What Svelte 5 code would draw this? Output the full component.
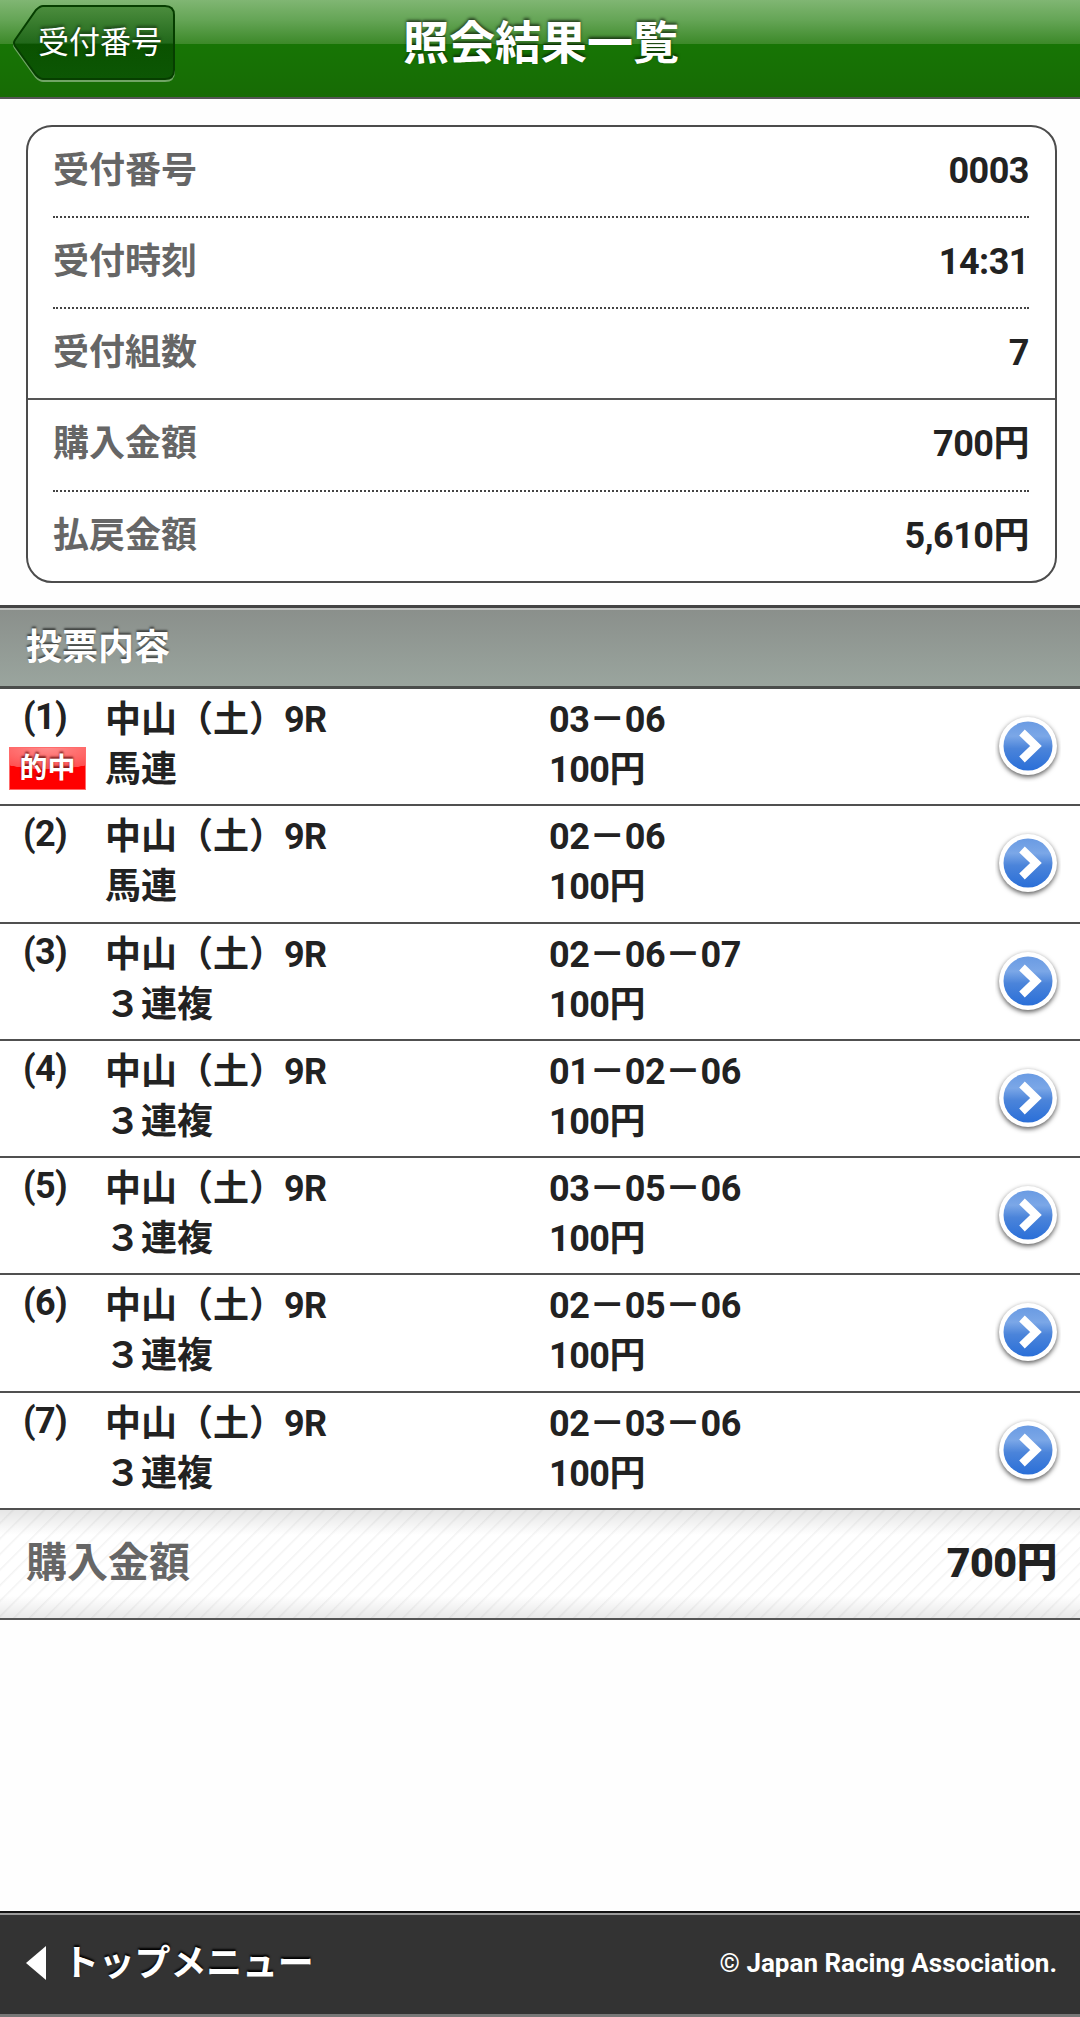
<script lang="ts">
	const summary = [
		{ label: '受付番号', value: '0003', line: 'dotted' },
		{ label: '受付時刻', value: '14:31', line: 'dotted' },
		{ label: '受付組数', value: '7', line: 'solid' },
		{ label: '購入金額', value: '700円', line: 'dotted' },
		{ label: '払戻金額', value: '5,610円', line: 'none' }
	];

	const bets = [
		{ type: '馬連', numbers: '03－06', hit: true },
		{ type: '馬連', numbers: '02－06', hit: false },
		{ type: '３連複', numbers: '02－06－07', hit: false },
		{ type: '３連複', numbers: '01－02－06', hit: false },
		{ type: '３連複', numbers: '03－05－06', hit: false },
		{ type: '３連複', numbers: '02－05－06', hit: false },
		{ type: '３連複', numbers: '02－03－06', hit: false }
	];
</script>

<div class="page">
	<header>
		<button class="back">
			<svg width="164" height="82" viewBox="0 0 164 82" aria-hidden="true">
				<defs>
					<linearGradient id="back-fill" x1="0" y1="0" x2="0" y2="1">
						<stop offset="0" stop-color="#4c8d3e" />
						<stop offset="0.51" stop-color="#21681a" />
						<stop offset="0.52" stop-color="#0a5200" />
						<stop offset="1" stop-color="#0c5604" />
					</linearGradient>
				</defs>
				<path class="rim" d="M31 4H153Q162 4 162 13V68Q162 77 153 77H31Q28 77 24 73L3 44Q1 41 3 38L24 8Q28 4 31 4Z" />
				<path class="face" d="M31 4H153Q162 4 162 13V68Q162 77 153 77H31Q28 77 24 73L3 44Q1 41 3 38L24 8Q28 4 31 4Z" fill="url(#back-fill)" />
			</svg>
			<span>受付番号</span>
		</button>
		<h1>照会結果一覧</h1>
	</header>

	<dl class="card">
		{#each summary as item}
			<div class="item {item.line}">
				<dt>{item.label}</dt>
				<dd>{item.value}</dd>
			</div>
		{/each}
	</dl>

	<h2>投票内容</h2>

	<ul>
		{#each bets as bet, i}
			<li>
				<div class="no">
					<span>({i + 1})</span>
					{#if bet.hit}<em>的中</em>{/if}
				</div>
				<div class="race">中山（土）<span>9R</span><br />{bet.type}</div>
				<div class="stake">{bet.numbers}<br />100円</div>
				<svg class="go" width="66" height="68" viewBox="0 0 66 68" aria-hidden="true">
					<circle class="ring" cx="33" cy="32" r="29" />
					<circle cx="33" cy="32" r="24.500" fill="url(#go-fill)" />
					<path d="M27 18.500L41 32L27 45.500" />
				</svg>
			</li>
		{/each}
	</ul>

	<div class="total">
		<span>購入金額</span>
		<strong>700円</strong>
	</div>

	<footer>
		<a href="#top">
			<svg width="20" height="34" viewBox="0 0 20 34" aria-hidden="true">
				<path d="M20 0V34L0 17Z" />
			</svg>
			<span>トップメニュー</span>
		</a>
		<small>© Japan Racing Association.</small>
	</footer>
	<div class="edge"></div>
</div>

<svg class="defs" width="0" height="0" aria-hidden="true">
	<defs>
		<linearGradient id="go-fill" x1="0" y1="0" x2="0" y2="1">
			<stop offset="0" stop-color="#6a9be3" />
			<stop offset="0.3" stop-color="#7ba7e7" />
			<stop offset="0.55" stop-color="#4b84da" />
			<stop offset="1" stop-color="#2a6fd8" />
		</linearGradient>
	</defs>
</svg>

<style>
	:global(body) {
		margin: 0;
		background: #fefefe;
	}

	.page {
		box-sizing: border-box;
		display: flex;
		flex-direction: column;
		width: 1080px;
		height: 2017px;
		overflow: hidden;
		background: #fefefe;
		color: #222;
		font-family: Roboto, 'Noto Sans CJK JP', sans-serif;
		font-size: 36px;
		font-weight: 700;
	}

	header {
		box-sizing: border-box;
		display: grid;
		grid-template-columns: 176px 1fr 174px;
		height: 99px;
		border-bottom: 2px solid #555;
		background: linear-gradient(#80b673 0, #65a556 20px, #3c8929 44px, #177505 44px, #176b05 97px);
		color: #fff;
	}

	.back {
		display: grid;
		width: 164px;
		height: 82px;
		margin: 2px 0 0 12px;
		padding: 0;
		border: 0;
		background: none;
		color: #fff;
		font: 400 31px/82px Roboto, 'Noto Sans CJK JP', sans-serif;
		text-shadow: 0 -2px 3px rgba(0, 0, 0, 0.5);
	}
	.back > * {
		grid-area: 1 / 1;
	}
	.back span {
		padding-left: 26px;
		text-align: left;
		white-space: nowrap;
	}
	.rim {
		fill: #70a565;
		stroke: #70a565;
		stroke-width: 2;
		transform: translateY(2px);
	}
	.face {
		stroke: #063e00;
		stroke-width: 2;
	}

	h1 {
		margin: 0;
		font-size: 46px;
		line-height: 86px;
		text-align: center;
		text-shadow: 0 -2px 3px rgba(0, 0, 0, 0.6);
	}

	.card {
		box-sizing: border-box;
		height: 458px;
		margin: 26px 23px 22px 26px;
		border: 2px solid #4c4c4c;
		border-radius: 26px;
		background: #fff;
	}
	.item {
		box-sizing: border-box;
		display: flex;
		justify-content: space-between;
		height: 91px;
		margin: 0 26px 0 25px;
		line-height: 88px;
	}
	.dotted {
		border-bottom: 2px dotted #444;
	}
	.solid {
		margin: 0;
		padding: 0 26px 0 25px;
		border-bottom: 2px solid #555;
	}
	/* rows after the full-width rule are a pixel taller */
	.solid + .item {
		height: 92px;
	}
	dt {
		color: #666;
	}
	dd {
		margin: 0;
		letter-spacing: -0.500px;
	}

	h2 {
		box-sizing: border-box;
		height: 84px;
		margin: 0;
		padding-left: 26px;
		border-top: 3px solid #444;
		border-bottom: 3px solid #4a4d4b;
		background: linear-gradient(#8a8f8b, #9aa59e);
		box-shadow: inset 0 2px #bfc1bf;
		color: #fff;
		font-size: 36px;
		line-height: 80px;
		text-shadow: 0 -2px 2px rgba(0, 0, 0, 0.55);
	}

	ul {
		margin: 0;
		padding: 0;
		list-style: none;
	}
	li {
		box-sizing: border-box;
		display: grid;
		grid-template-columns: 105px 444px 1fr 66px;
		height: 117.300px;
		padding-right: 19px;
		border-bottom: 2px solid #505050;
		background: #fff;
		line-height: 50px;
	}
	.race,
	.stake {
		padding-top: 6px;
	}
	.race span,
	.no span {
		letter-spacing: -0.600px;
	}
	.race span {
		margin-left: -1px;
	}
	.stake {
		letter-spacing: -0.500px;
	}
	.no span {
		display: block;
		height: 55px;
		padding: 3px 0 0 23px;
		box-sizing: border-box;
	}
	em {
		box-sizing: border-box;
		display: block;
		width: 77px;
		height: 43px;
		margin: 3px 0 0 9px;
		border: 1px solid #ff6b6b;
		background: radial-gradient(ellipse 90% 52% at 50% 0, #ff8c8c, #ff5050 98%, transparent 100%), linear-gradient(#ff8080, #f00 45%);
		color: #fff;
		font-size: 28px;
		font-style: normal;
		line-height: 42px;
		text-align: center;
		text-shadow: 0 -2px 2px rgba(80, 0, 0, 0.7);
	}
	.go {
		margin-top: 25px;
	}
	.ring {
		fill: #fff;
		filter: drop-shadow(0 2px 2.500px rgba(0, 0, 0, 0.65));
	}
	.go path {
		fill: none;
		stroke: #fff;
		stroke-width: 8;
	}

	.total {
		box-sizing: border-box;
		display: flex;
		justify-content: space-between;
		height: 110px;
		padding: 0 23px 0 26px;
		border-bottom: 2px solid #555;
		background:
			linear-gradient(rgba(0, 0, 0, 0.1), transparent 25px, transparent 86px, rgba(0, 0, 0, 0.09)),
			repeating-linear-gradient(135deg, #fff 0, #fff 8px, #f3f3f3 9px, #fff 11px);
		font-size: 41px;
		line-height: 106px;
	}
	.total span {
		color: #666;
	}
	.total strong {
		letter-spacing: -0.500px;
	}

	footer {
		box-sizing: border-box;
		display: flex;
		align-items: center;
		justify-content: space-between;
		height: 103px;
		margin-top: auto;
		padding: 0 23px 2px 26px;
		border-top: 2px solid #111;
		background: #333;
		box-shadow: inset 0 2px #999;
		color: #fff;
	}
	footer a {
		display: flex;
		align-items: center;
		gap: 17px;
		color: #fff;
		text-decoration: none;
		text-shadow: 0 -2px 2px #000;
	}
	footer a span {
		padding-bottom: 6px;
		letter-spacing: -0.200px;
	}
	footer path {
		fill: #fff;
	}
	small {
		font-size: 26px;
	}
	.edge {
		height: 3px;
		background: #777;
	}
	.defs {
		position: absolute;
	}
</style>
